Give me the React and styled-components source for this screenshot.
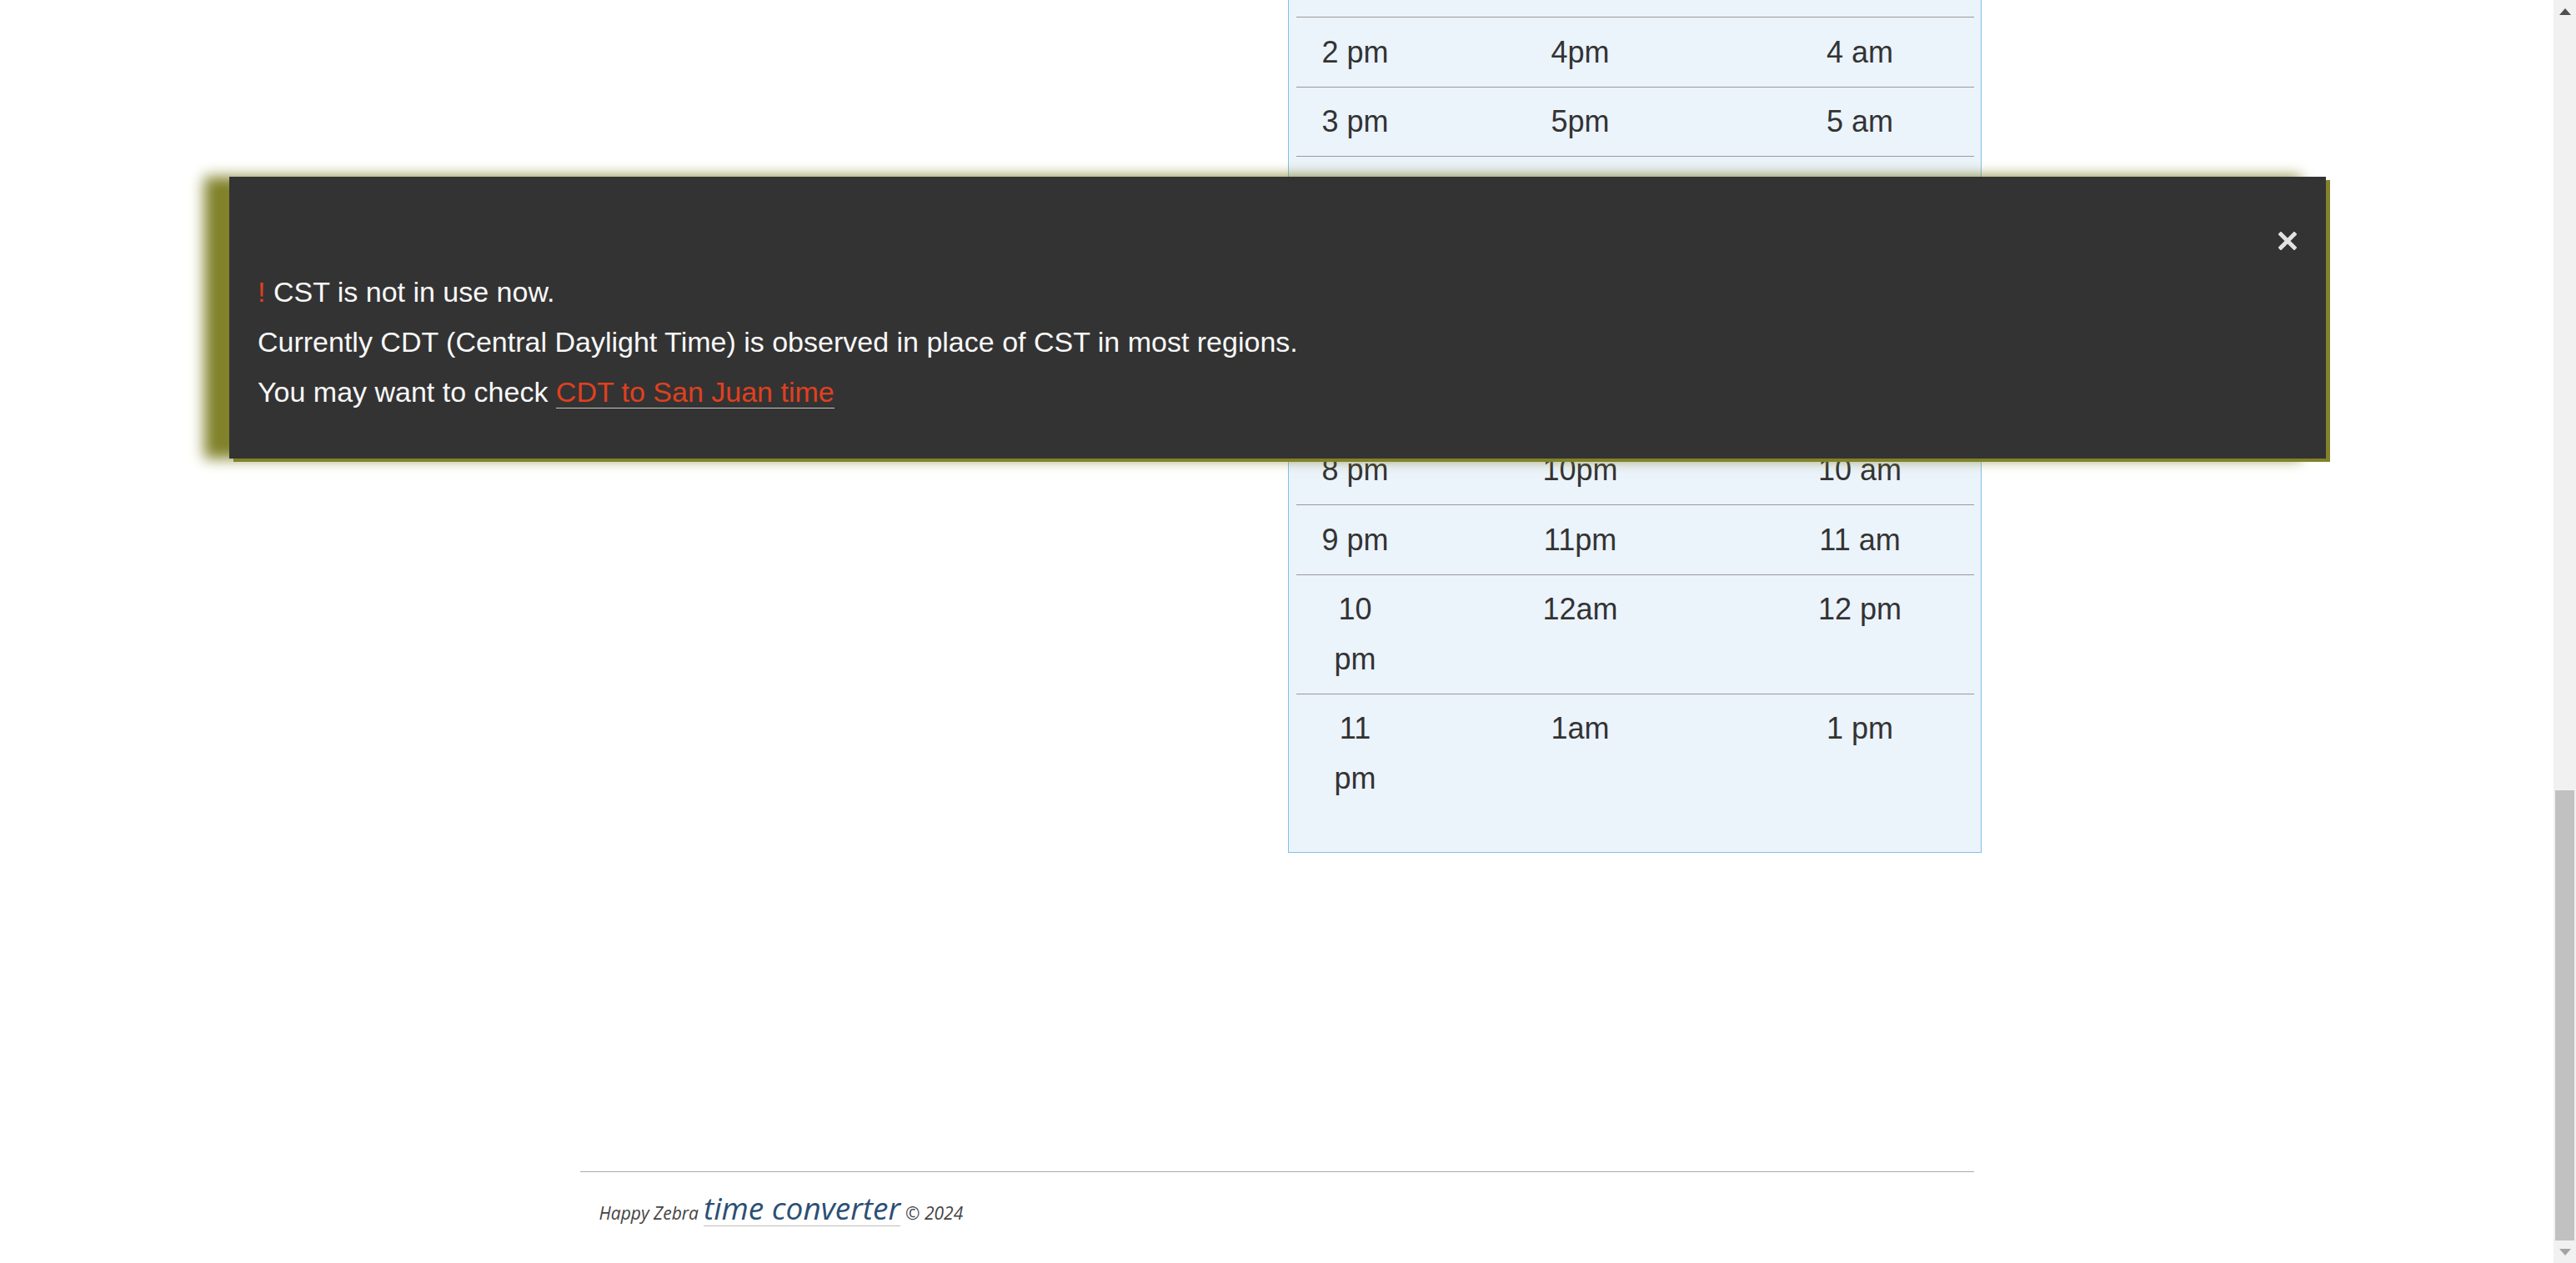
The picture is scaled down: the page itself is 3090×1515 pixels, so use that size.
import React from 'react';
import styled, { createGlobalStyle } from 'styled-components';

const GlobalStyle = createGlobalStyle`
    html, body {
        margin: 0;
        height: 100%;
        overflow: hidden;
        background: #fff;
        font-family: "Liberation Sans", Arial, sans-serif;
    }
`

const Page = styled.div`
    height: 100vh;
    padding-right: 27px;
    position: relative;
`

const Container = styled.div`
    width: 1672px;
    margin: 0 auto;
    display: flex;
    flex-direction: column;
`

const Main = styled.div`
    display: grid;
    grid-template-columns: 849px 832px;
`

const TableBox = styled.div`
    background: #ebf3fb;
    border: 1px solid #7fc0ea;
    border-top: none;
    padding: 20px 8px 47px 9px;
`

const Row = styled.div`
    display: grid;
    grid-template-columns: 142px 398px 1fr;
    border-top: 1px solid #9a9a9a;
    font-size: 36px;
    line-height: 59.4px;
    color: #333;
    text-align: center;
`

const Cell = styled.div`
    padding: 11.6px ${p => (p.$narrow ? '25px' : '0')};
`

const Footer = styled.footer`
    margin-top: 382px;
    border-top: 1px solid #ababab;
    padding: 22px 0 0 23px;
    display: flex;
    align-items: baseline;
    gap: 6px;
    font-family: "Open Sans", "Noto Sans", sans-serif;
    font-style: italic;
`

const Small = styled.span`
    font-size: 21px;
    color: #444;
`

const Brand = styled.span`
    font-size: 37px;
    line-height: 42px;
    color: #2b5074;
    border-bottom: 1px solid #bdbdbd;
`

const Dialog = styled.div`
    position: absolute;
    left: 275px;
    top: 212px;
    width: 2515px;
    box-sizing: border-box;
    padding: 66px 35px 50px 34px;
    background: #333;
    color: #f8f8f8;
    font-size: 34px;
    line-height: 60px;
    box-shadow: 5px 4px 0 #81822a, -30px 0 16px #81822a;
`

const CloseRow = styled.div`
    display: flex;
    justify-content: flex-end;
    height: 22px;
    margin-bottom: 20px;
`

const CloseButton = styled.button`
    border: none;
    background: none;
    padding: 0;
    width: 22px;
    height: 22px;
    cursor: pointer;
    display: block;
`

const Line = styled.p`
    margin: 0;
`

const Mark = styled.span`
    color: #e0401f;
`

const RedLink = styled.a`
    color: #e0401f;
    text-decoration: none;
    border-bottom: 1px solid #c8c8c8;
`

const Scrollbar = styled.div`
    position: fixed;
    top: 0;
    right: 0;
    bottom: 0;
    width: 27px;
    background: #f1f1f1;
    display: flex;
    flex-direction: column;
    align-items: center;
`

const Arrow = styled.div`
    height: 27px;
    width: 27px;
    display: flex;
    align-items: center;
    justify-content: center;
`

const Track = styled.div`
    flex: 1;
    width: 100%;
    display: flex;
    flex-direction: column;
    justify-content: flex-end;
    align-items: center;
`

const Thumb = styled.div`
    width: 23px;
    height: 540px;
    background: #c1c1c1;
`

const rows = [
    ['2 pm', '4pm', '4 am'],
    ['3 pm', '5pm', '5 am'],
    ['4 pm', '6pm', '6 am'],
    ['5 pm', '7pm', '7 am'],
    ['6 pm', '8pm', '8 am'],
    ['7 pm', '9pm', '9 am'],
    ['8 pm', '10pm', '10 am'],
    ['9 pm', '11pm', '11 am'],
    ['10 pm', '12am', '12 pm'],
    ['11 pm', '1am', '1 pm'],
]

function App() {
    return (
        <>
            <GlobalStyle />
            <Page>
                <Container>
                    <Main>
                        <div />
                        <TableBox>
                            {rows.map(r => (
                                <Row key={r[0]}>
                                    <Cell $narrow>{r[0]}</Cell>
                                    <Cell>{r[1]}</Cell>
                                    <Cell>{r[2]}</Cell>
                                </Row>
                            ))}
                        </TableBox>
                    </Main>
                    <Footer>
                        <Small>Happy Zebra</Small>
                        <Brand>time converter</Brand>
                        <Small>© 2024</Small>
                    </Footer>
                </Container>

                <Dialog>
                    <CloseRow>
                        <CloseButton aria-label="close">
                            <svg width="22" height="22" viewBox="0 0 22 22">
                                <path d="M3 3 L19 19 M19 3 L3 19" stroke="#e2e2e2" strokeWidth="5" strokeLinecap="square" />
                            </svg>
                        </CloseButton>
                    </CloseRow>
                    <Line><Mark>!</Mark> CST is not in use now.</Line>
                    <Line>Currently CDT (Central Daylight Time) is observed in place of CST in most regions.</Line>
                    <Line>You may want to check <RedLink href="#">CDT to San Juan time</RedLink></Line>
                </Dialog>

                <Scrollbar>
                    <Arrow>
                        <svg width="14" height="8" viewBox="0 0 14 8"><path d="M7 0 L14 8 L0 8 Z" fill="#505050" /></svg>
                    </Arrow>
                    <Track>
                        <Thumb />
                    </Track>
                    <Arrow>
                        <svg width="14" height="8" viewBox="0 0 14 8"><path d="M0 0 L14 0 L7 8 Z" fill="#a3a3a3" /></svg>
                    </Arrow>
                </Scrollbar>
            </Page>
        </>
    );
}

export default App;
